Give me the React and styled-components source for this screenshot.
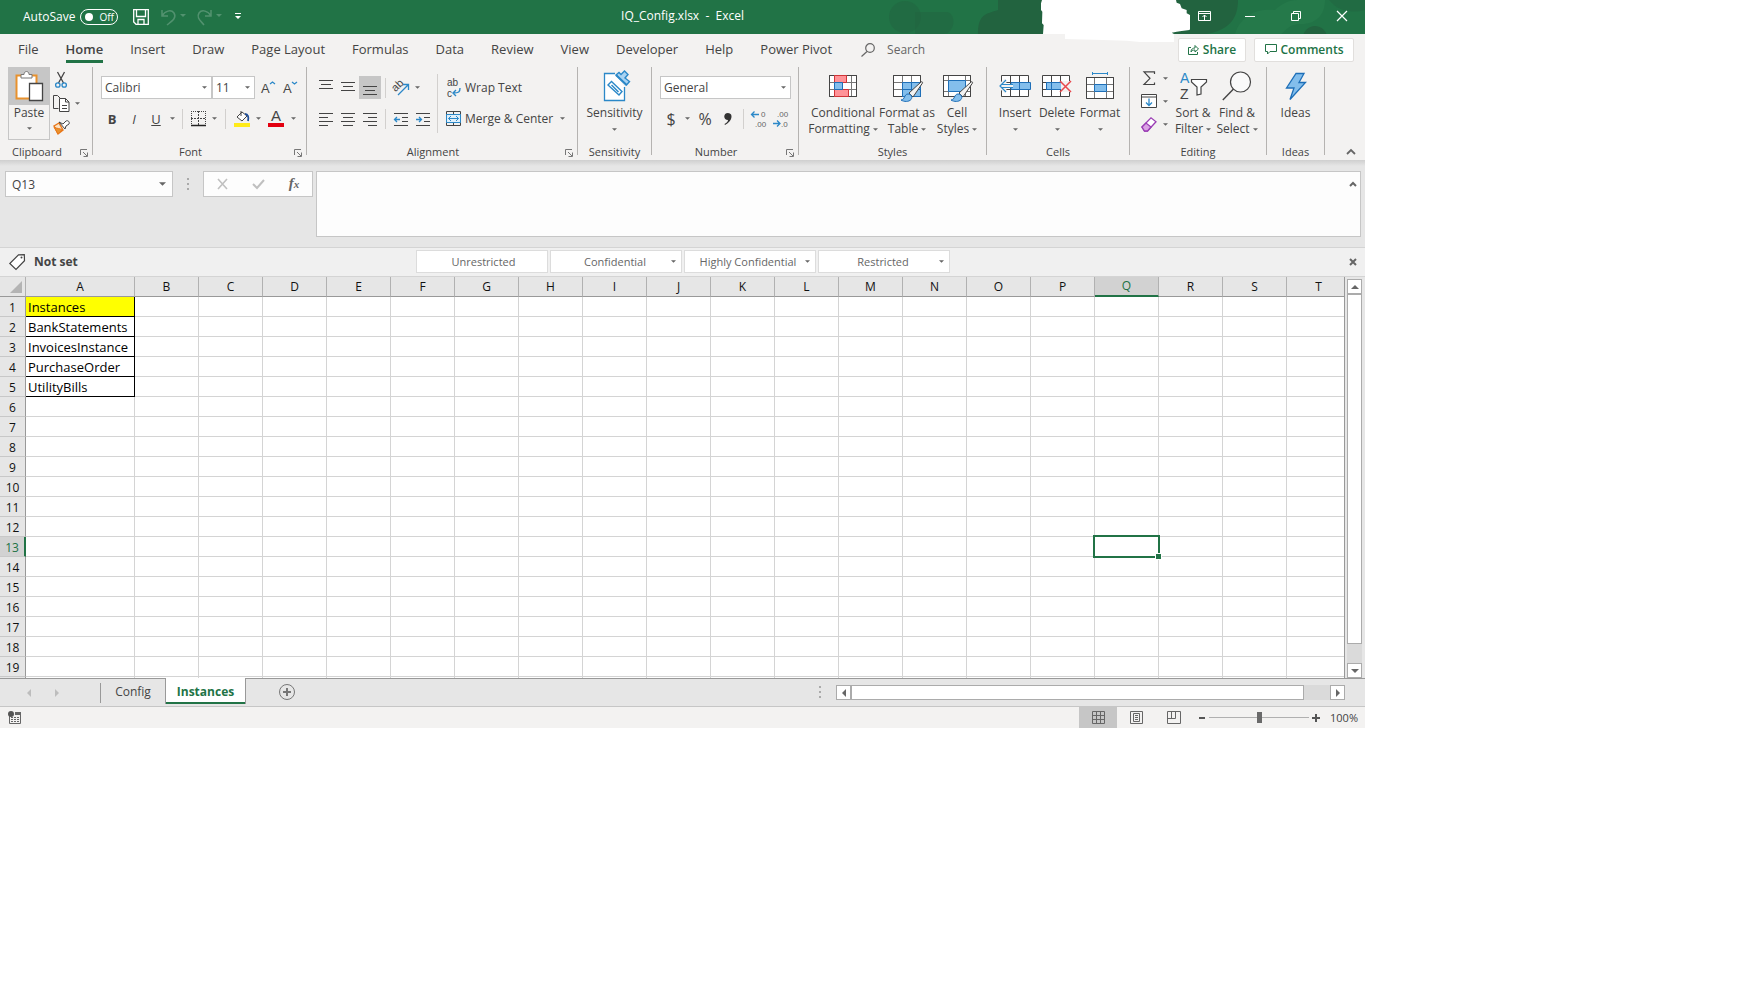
import React, { useState } from "react";
import styled, { createGlobalStyle, css } from "styled-components";

const green = "#217346";
const blue = "#2b88c8";
const ink = "#444444";
const line = "#c6c6c6";

const GlobalStyle = createGlobalStyle`
  *, *::before, *::after { box-sizing: border-box; }
  body {
    margin: 0;
    background: #ffffff;
    font-family: "Open Sans", "Noto Sans", sans-serif;
    font-size: 12px;
    color: ${ink};
  }
  button, input, select, textarea {
    font: inherit;
    color: inherit;
    margin: 0;
    padding: 0;
    border: 0;
    background: none;
    border-radius: 0;
    outline: none;
  }
  svg { display: block; flex: none; overflow: visible; }
`;

const Page = styled.div`
  padding-right: 381px;
`;
const Window = styled.main`
  position: relative;
  display: flex;
  flex-direction: column;
  background: #e6e6e6;
`;

/* title bar */
const TitleBar = styled.header`
  position: relative;
  display: grid;
  grid-template-columns: 1fr auto 1fr;
  align-items: start;
  height: 34px;
  overflow: hidden;
  background: ${green};
  color: #ffffff;
`;
const TitleArt = styled.svg`
  position: absolute;
  top: 0;
  right: 0;
`;
const Redaction = styled.svg`
  position: absolute;
  top: 0;
  right: 174px;
  z-index: 2;
`;
const QuickAccess = styled.div`
  position: relative;
  display: flex;
  align-items: center;
  height: 33px;
  padding-left: 23px;
  font-size: 12px;
`;
const AutoSave = styled.label`
  display: flex;
  align-items: center;
  gap: 5px;
  margin-right: 9px;
`;
const Toggle = styled.span`
  display: flex;
  align-items: center;
  gap: 6px;
  width: 38px;
  height: 16px;
  padding-left: 4px;
  border: 1px solid #ffffff;
  border-radius: 8px;
  font-size: 10px;
  input {
    appearance: none;
    width: 8px;
    height: 8px;
    border-radius: 50%;
    background: #ffffff;
  }
`;
const Title = styled.h1`
  position: relative;
  margin: 0;
  font-size: 12px;
  font-weight: 400;
  line-height: 31px;
  white-space: pre;
`;
const WindowButtons = styled.div`
  position: relative;
  display: flex;
  justify-content: flex-end;
`;

const IconButton = styled.button`
  display: flex;
  align-items: center;
  justify-content: center;
  flex: none;
  width: ${(p) => p.$w || 22}px;
  height: ${(p) => p.$h || 23}px;
  background: ${(p) => (p.$on ? "#c6c6c6" : "transparent")};
  font-size: ${(p) => p.$size || 12}px;
  opacity: ${(p) => (p.$dim ? 0.22 : 1)};
`;
const FxButton = styled(IconButton)`
  color: #666666;
  font-family: "Liberation Serif", serif;
  font-style: italic;
  font-weight: 700;
  font-size: 15px;
  sub { font-size: 11px; line-height: 12px; vertical-align: baseline; }
`;

/* tabs */
const TabRow = styled.nav`
  display: flex;
  align-items: center;
  gap: 1px;
  height: 33px;
  padding: 0 11px 2px 5px;
  background: #f3f2f1;
  font-size: 13px;
`;
const Tab = styled.button`
  position: relative;
  height: 30px;
  padding: 0 13px 2px;
  line-height: 26px;
  white-space: nowrap;
  ${(p) =>
    p.$active &&
    css`
      font-weight: 600;
      &::after {
        content: "";
        position: absolute;
        left: 13px;
        right: 13px;
        bottom: 2px;
        height: 3px;
        background: ${green};
      }
    `}
`;
const Search = styled.label`
  display: flex;
  align-items: center;
  gap: 12px;
  flex: 1;
  margin-left: 15px;
  input {
    width: 100px;
    height: 24px;
    font-size: 12px;
    &::placeholder { color: #666666; opacity: 1; }
  }
`;
const ShareButton = styled.button`
  display: flex;
  align-items: center;
  justify-content: center;
  gap: 4px;
  width: ${(p) => p.$w}px;
  height: 24px;
  margin-left: 7px;
  background: #ffffff;
  border: 1px solid #e1dfdd;
  border-radius: 2px;
  color: ${green};
  font-size: 12px;
  font-weight: 600;
`;

/* ribbon */
const Ribbon = styled.section`
  display: flex;
  height: 93px;
  background: #f3f2f1;
`;
const Group = styled.div`
  display: flex;
  flex-direction: column;
  flex: none;
  width: ${(p) => p.$w}px;
  height: 88px;
  border-right: 1px solid #b5b3b1;
`;
const GroupBody = styled.div`
  display: flex;
  flex: none;
  justify-content: ${(p) => p.$justify || "flex-start"};
  height: 77px;
  padding-left: ${(p) => p.$left || 0}px;
`;
const GroupFoot = styled.div`
  display: flex;
  align-items: center;
  flex: none;
  height: 16px;
  font-size: 11px;
  line-height: 16px;
  span { flex: 1; text-align: center; }
  button { width: 18px; height: 16px; padding: 2px 0 0 6px; }
`;
const Rows = styled.div`
  display: flex;
  flex-direction: column;
  gap: ${(p) => p.$gap || 8}px;
  padding-top: ${(p) => p.$top || 9}px;
`;
const Row = styled.div`
  display: flex;
  align-items: center;
  height: ${(p) => p.$h || 23}px;
`;
const Divider = styled.span`
  flex: none;
  width: 1px;
  height: ${(p) => p.$h || 20}px;
  margin: ${(p) => p.$m || "0 4px"};
  background: #d2d0ce;
`;
const TextButton = styled.button`
  display: flex;
  align-items: center;
  gap: 4px;
  height: 23px;
  padding-left: 8px;
  white-space: nowrap;
`;
const PasteButton = styled.button`
  display: flex;
  flex-direction: column;
  align-items: center;
  gap: 1px;
  width: 42px;
  height: 73px;
  background: linear-gradient(#c6c6c6 37px, transparent 37px);
  border: 1px solid #c6c6c6;
  line-height: 16px;
  > svg { margin-top: 5px; }
`;
const BigButton = styled.button`
  display: flex;
  flex-direction: column;
  align-items: center;
  width: ${(p) => p.$w}px;
  line-height: 16px;
  white-space: nowrap;
`;
const BigIcon = styled.span`
  display: flex;
  align-items: center;
  justify-content: center;
  height: ${(p) => p.$h || 38}px;
`;
const BigLine = styled.span`
  display: flex;
  align-items: center;
  gap: 3px;
  height: 16px;
`;
const SelectBox = styled.span`
  position: relative;
  display: flex;
  align-items: center;
  width: ${(p) => p.$w}px;
  height: 23px;
  margin-right: ${(p) => p.$mr || 0}px;
  background: #ffffff;
  border: 1px solid ${line};
  select {
    appearance: none;
    width: 100%;
    height: 21px;
    padding-left: 3px;
  }
  svg { position: absolute; right: 4px; }
`;
const Collapse = styled.div`
  display: flex;
  flex: 1;
  align-items: flex-end;
  justify-content: flex-end;
  padding: 0 4px 0 0;
`;

/* formula bar */
const FormulaBar = styled.section`
  display: flex;
  align-items: flex-start;
  height: 87px;
  padding: 11px 4px 0 5px;
  background: linear-gradient(#cfcfcf, #e6e6e6 6px);
`;
const NameBox = styled.div`
  display: flex;
  align-items: center;
  width: 168px;
  height: 26px;
  background: #fdfdfd;
  border: 1px solid ${line};
  input {
    flex: 1;
    min-width: 0;
    padding-left: 6px;
  }
`;
const Grip = styled.span`
  display: flex;
  align-items: center;
  justify-content: center;
  width: 30px;
  height: 26px;
`;
const FxBox = styled.div`
  display: flex;
  justify-content: space-around;
  width: 110px;
  height: 26px;
  margin-right: 3px;
  background: #fdfdfd;
  border: 1px solid ${line};
`;
const FormulaInput = styled.div`
  display: flex;
  flex: 1;
  height: 66px;
  background: #fdfdfd;
  border: 1px solid ${line};
  textarea {
    flex: 1;
    resize: none;
    padding: 4px;
  }
`;

/* sensitivity bar */
const LabelBar = styled.section`
  display: grid;
  grid-template-columns: 1fr auto 1fr;
  align-items: center;
  height: 30px;
  padding-bottom: 1px;
  background: #f0f0f0;
  border-top: 1px solid #d4d4d4;
  border-bottom: 1px solid #d4d4d4;
`;
const Current = styled.div`
  display: flex;
  align-items: center;
  gap: 9px;
  padding-left: 9px;
  font-weight: 700;
  font-size: 12px;
`;
const Labels = styled.div`
  display: flex;
  gap: 2px;
`;
const LabelButton = styled.button`
  display: flex;
  align-items: center;
  width: 132px;
  height: 23px;
  padding: 0 5px;
  background: #ffffff;
  border: 1px solid #dcdcdc;
  color: #666666;
  font-size: 11px;
  line-height: 20px;
  white-space: nowrap;
  span { flex: 1; text-align: center; padding-left: ${(p) => (p.$tight ? 2 : 4)}px; }
`;
const CloseLabel = styled.div`
  display: flex;
  justify-content: flex-end;
  padding-right: 1px;
`;

/* sheet */
const SheetArea = styled.section`
  display: flex;
`;
const GridView = styled.div`
  flex: 1;
  min-width: 0;
  overflow: hidden;
  border-right: 1px solid #999999;
`;
const Sheet = styled.table`
  width: 1351px;
  table-layout: fixed;
  border-collapse: separate;
  border-spacing: 0;
  background: #ffffff;
  font-size: 12px;
  line-height: 18px;
  color: #000000;
  th, td { padding: 0; }
`;
const Corner = styled.th`
  width: 26px;
  height: 20px;
  background: #e6e6e6;
  border-right: 1px solid #b1b1b1;
  border-bottom: 1px solid #999999;
  svg { margin-left: 10px; }
`;
const ColHead = styled.th`
  width: ${(p) => p.$w}px;
  height: 20px;
  font-weight: 400;
  background: ${(p) => (p.$sel ? "#d2d2d2" : "#e6e6e6")};
  color: ${(p) => (p.$sel ? green : "#111111")};
  border-right: 1px solid #b1b1b1;
  border-bottom: ${(p) => (p.$sel ? `2px solid ${green}` : "1px solid #999999")};
`;
const RowHead = styled.th`
  height: ${(p) => p.$h || 20}px;
  font-weight: 400;
  line-height: 17px;
  background: ${(p) => (p.$sel ? "#d2d2d2" : "#e6e6e6")};
  color: ${(p) => (p.$sel ? green : "#111111")};
  border-right: ${(p) => (p.$sel ? `2px solid ${green}` : "1px solid #999999")};
  border-bottom: ${(p) => (p.$h ? "0" : "1px solid #c8c8c8")};
  && { padding-top: ${(p) => (p.$h ? 0 : 2)}px; }
`;
const Cell = styled.td`
  position: relative;
  border-right: 1px solid ${(p) => (p.$boxed ? "#000000" : "#d4d4d4")};
  border-bottom: ${(p) => (p.$stub ? "0" : `1px solid ${p.$boxed ? "#000000" : "#d4d4d4"}`)};
  background: ${(p) => (p.$fill ? "#ffff00" : "transparent")};
  font-size: 13px;
  && { padding-left: 2px; }
  white-space: nowrap;
`;
const Selection = styled.span`
  position: absolute;
  z-index: 1;
  inset: -2px;
  border: 2px solid ${green};
  &::after {
    content: "";
    position: absolute;
    right: -4px;
    bottom: -4px;
    width: 7px;
    height: 7px;
    background: ${green};
    border: 1px solid #ffffff;
  }
`;
const VScroll = styled.div`
  display: flex;
  flex-direction: column;
  width: 20px;
  padding: 2px 3px 0 2px;
`;
const ScrollButton = styled.button`
  display: flex;
  align-items: center;
  justify-content: center;
  flex: none;
  width: 15px;
  height: 15px;
  background: #ffffff;
  border: 1px solid #ababab;
`;
const Track = styled.div`
  display: flex;
  flex-direction: ${(p) => (p.$across ? "row" : "column")};
  flex: 1;
  padding: ${(p) => (p.$across ? "0 26px 0 0" : "0 0 19px 0")};
  background: #dadada;
`;
const Thumb = styled.div`
  flex: 1;
  background: #ffffff;
  border: 1px solid #ababab;
`;

const SheetTabs = styled.nav`
  display: flex;
  align-items: flex-start;
  height: 28px;
  padding-right: 20px;
  border-top: 1px solid #999999;
`;
const SheetNav = styled.div`
  display: flex;
  width: 101px;
  height: 20px;
  margin-top: 4px;
  padding-left: 15px;
  border-right: 1px solid #999999;
`;
const SheetTab = styled.button`
  flex: none;
  width: ${(p) => (p.$active ? 81 : 64)}px;
  height: 25px;
  line-height: 23px;
  ${(p) =>
    p.$active &&
    css`
      margin-top: -1px;
      height: 26px;
      background: #ffffff;
      border: solid #999999;
      border-width: 0 1px;
      box-shadow: inset 0 -2px 0 ${green};
      color: ${green};
      font-weight: 700;
    `}
`;
const AddSheet = styled.button`
  margin: 5px 0 0 33px;
`;
const HScroll = styled.div`
  display: flex;
  flex: none;
  width: 38%;
  min-width: 200px;
  max-width: 509px;
  height: 15px;
  margin: 6px 0 0 1px;
`;
const Spacer = styled.span`
  flex: 1;
`;

const StatusBar = styled.footer`
  display: flex;
  align-items: center;
  height: 22px;
  padding-right: 8px;
  background: #f3f2f1;
  border-top: 1px solid #c6c6c6;
  font-size: 11px;
`;
const Zoom = styled.label`
  display: flex;
  align-items: center;
  gap: 3px;
  margin-left: 6px;
  input {
    appearance: none;
    width: 100px;
    height: 11px;
    background: linear-gradient(#b0b0b0, #b0b0b0) center / 100% 1px no-repeat;
    &::-webkit-slider-thumb {
      appearance: none;
      width: 5px;
      height: 11px;
      background: #6a6a6a;
    }
  }
  output { width: 27px; margin-left: 7px; line-height: 18px; white-space: nowrap; }
`;

/* small drawings */
const Caret = ({ c = "#666666", w = 5 }) => (
  <svg width={w} height={(w + 1) / 2} viewBox="0 0 6 3">
    <path d="M0 0h6L3 3z" fill={c} />
  </svg>
);
const CaretButton = ({ label, w = 11 }) => (
  <IconButton $w={w} aria-label={label}><Caret /></IconButton>
);
const Launcher = ({ label }) => (
  <button aria-label={label}>
    <svg width="8" height="8" viewBox="0 0 8 8" fill="none" stroke="#777">
      <path d="M.5 6V.5H7M3 3l4 4M7.500 3.500v4h-4" />
    </svg>
  </button>
);
const Pic = ({ w, h, children }) => (
  <svg width={w} height={h} viewBox={`0 0 ${w} ${h}`} fill="none" stroke={ink}>
    {children}
  </svg>
);
const Glyph = styled.text`
  font-family: "Liberation Sans", sans-serif;
  font-size: ${(p) => p.$size}px;
  fill: ${(p) => p.$c || ink};
  stroke: none;
`;
const Lines = ({ rows }) => (
  <Pic w={14} h={14}>
    {rows.map(([x, w], i) => (
      <path key={i} d={`M${x} ${i * 4 + 1.5}h${w}`} />
    ))}
  </Pic>
);
const VLines = ({ y }) => (
  <Pic w={14} h={15}>
    <path d={`M0 ${y + 0.5}h14M2 ${y + 4.5}h10M0 ${y + 8.5}h14`} />
  </Pic>
);

const Brush = ({ x, y }) => (
  <g transform={`translate(${x} ${y})`}>
    <path d="M8 10L20 -1c1-.8 2 .2 1.400 1.200L12 14z" fill="#f3f2f1" />
    <path d="M0 17c4 0 3-6 7-6 3 0 5 3 3 5.500-2 2.500-7 2.500-10 .5z" fill="#83beec" stroke="#1e6fb8" />
  </g>
);
const CellsBase = ({ children }) => (
  <Pic w={30} h={24}>
    <path d="M1.500 1.500h27v21h-27z" fill="#fff" />
    <path d="M1 8.500h28M1 15.500h28M10.500 1v22M19.500 1v22" stroke="#777" />
    <path d="M1.500 1.500h27v21h-27z" />
    {children}
  </Pic>
);

const ConditionalIcon = () => (
  <Pic w={28} h={22}>
    <path d="M.5.500h27v21H.5z" fill="#fff" />
    <path d="M0 7.500h28M0 14.500h28M5.500 0v22M22.500 0v22" stroke="#777" />
    <path d="M5.500 .5h12v7h-12zM5.500 14.500h14v7h-14z" fill="#ff9398" stroke="#d13438" />
    <path d="M5.500 7.500h8v7h-8z" fill="#83beec" stroke="#1e6fb8" />
    <path d="M5 .5H.5v21H5M18 .5h9.500v21H20" />
  </Pic>
);
const FormatTableIcon = () => (
  <CellsBase>
    <path d="M10.500 8.500h18v14h-18z" fill="#83beec" stroke="#1e6fb8" />
    <path d="M19.500 8v14M10 15.500h18" stroke="#1e6fb8" />
    <Brush x={9} y={9} />
  </CellsBase>
);
const CellStylesIcon = () => (
  <Pic w={30} h={24}>
    <path d="M1.500 1.500h27v21h-27z" fill="#fff" />
    <path d="M1 6.500h28M1 17.500h28M6.500 1v22M23.500 1v22" stroke="#777" />
    <path d="M6.500 6.500h17v11h-17z" fill="#83beec" stroke="#1e6fb8" />
    <path d="M1.500 1.500h27v21h-27z" />
    <Brush x={9} y={9} />
  </Pic>
);
const InsertIcon = () => (
  <Pic w={32} h={24}>
    <path d="M2.500 1.500h27v21h-27z" fill="#fff" />
    <path d="M2 8.500h28M2 15.500h28M11.500 1v22M20.500 1v22" />
    <path d="M12 8.500h19.500v7H12z" fill="#83beec" stroke="#1e6fb8" />
    <path d="M20.500 9v6" stroke="#1e6fb8" />
    <path d="M1 8h6v8H1z" fill="#f3f2f1" stroke="none" />
    <path d="M7 6l-6 6 6 6M1 12h13" stroke="#f3f2f1" strokeWidth="4" />
    <path d="M7 6l-6 6 6 6M2 10.500h12M2 13.500h12" stroke={blue} strokeWidth="1.200" />
  </Pic>
);
const DeleteIcon = () => (
  <Pic w={30} h={24}>
    <path d="M.5 1.500h27v21H.5z" fill="#fff" />
    <path d="M0 8.500h28M0 15.500h28M9.500 1v22M18.500 1v22" />
    <path d="M4.500 8.500h15v7h-15z" fill="#83beec" stroke="#1e6fb8" />
    <path d="M9.500 9v6" stroke="#1e6fb8" />
    <path d="M19 7h11v11H19z" fill="#f3f2f1" stroke="none" />
    <path d="M18 7l11 11M29 7L18 18" stroke="#e8484d" strokeWidth="1.500" />
  </Pic>
);
const FormatIcon = () => (
  <Pic w={28} h={28}>
    <path d="M.5 5.500h27v21H.5z" fill="#fff" />
    <path d="M0 12.500h28M0 19.500h28M8.500 5v22M20.500 5v22" stroke="#777" />
    <path d="M.5 5.500h27v21H.5z" />
    <path d="M8.500 12.500h12v7h-12z" fill="#83beec" stroke="#1e6fb8" />
    <path d="M6.500 0v3M21.500 0v3M6.500 1.500h15" stroke={blue} />
  </Pic>
);
const SensitivityIcon = () => (
  <Pic w={24} h={32}>
    <path d="M12 3.500H1.500v27h20V17" fill="#fff" stroke={blue} strokeWidth="1.300" />
    <g stroke={blue} strokeWidth="1.400" fill="#fff">
      <path d="M5 15l3.500-3.500L19 21.500 16 25z" />
      <path d="M8.500 15l7 7" />
      <path d="M13 5l3-2.500 2 2L21.500 1 25 4.500l-3 3.500 4.500 3.500-3 3.500z" fill="#a9d3f2" />
      <path d="M13 5l10.500 10" strokeWidth="2" />
    </g>
  </Pic>
);
const PasteIcon = () => (
  <Pic w={28} h={32}>
    <path d="M1.500 5.500h20v23h-20z" fill="#fff" stroke="#e8912d" strokeWidth="2" />
    <path d="M6 8V4.500h3c0-4 5-4 5 0h3V8z" fill="#fff" stroke="#777" />
    <path d="M14.500 13.500h13v17h-13z" fill="#fff" strokeWidth="1.300" />
  </Pic>
);
const CutIcon = () => (
  <Pic w={12} h={18}>
    <path d="M2.500 1l6 11M9.500 1l-6 11" strokeWidth="1.300" />
    <circle cx="2.800" cy="14" r="2.200" stroke={blue} strokeWidth="1.300" />
    <circle cx="9.200" cy="14" r="2.200" stroke={blue} strokeWidth="1.300" />
  </Pic>
);
const CopyIcon = () => (
  <Pic w={17} h={17}>
    <path d="M5.500 13.500h-5v-13h4l3 3" />
    <path d="M6.500 3.500h6l3.500 3.500v9.500H6.500z" fill="#fff" />
    <path d="M12.500 3.500V7H16M9 10.500h5M9 13.500h5" />
  </Pic>
);
const PainterIcon = () => (
  <Pic w={17} h={17}>
    <path d="M6 5L1 8l4 8 5-4z" fill="#fbe3c5" stroke="#e8771a" strokeWidth="1.400" />
    <path d="M1 9c3 2 6 1 8 3L5 16z" fill="#e8912d" stroke="#e8771a" />
    <path d="M6 4l6 7 1-3 3-2c1-2-1-4-3-3l-3 3z" fill="#fff" />
  </Pic>
);
const BordersIcon = () => (
  <Pic w={15} h={15}>
    <path d="M0 .5h15M.5 0v15M14.500 0v15" strokeDasharray="1 1" />
    <path d="M7.500 0v14M0 7.500h15" strokeDasharray="2 1" />
    <path d="M0 14.500h15" stroke="#222" strokeWidth="1.500" />
  </Pic>
);
const FillIcon = () => (
  <Pic w={16} h={17}>
    <path d="M7 1v5M3 7l5-5 5 4-5 5z" fill="#fff" />
    <path d="M11 4c3 0 4 3 3 7" stroke="#1e4e9a" strokeWidth="1.800" />
    <path d="M0 13h16v4H0z" fill="#ffeb1a" stroke="none" />
  </Pic>
);
const FontColorIcon = () => (
  <Pic w={16} h={17}>
    <Glyph $size={15} x="8" y="11" textAnchor="middle">A</Glyph>
    <path d="M0 13h16v4H0z" fill="#e3000f" stroke="none" />
  </Pic>
);
const GrowIcon = ({ down }) => (
  <Pic w={14} h={14}>
    <Glyph $size={13} x="0" y="12">A</Glyph>
    <path d={down ? "M9 1l2.500 2L14 1" : "M9 3l2.500-2L14 3"} stroke={blue} strokeWidth="1.300" />
  </Pic>
);
const OrientIcon = () => (
  <Pic w={17} h={17}>
    <Glyph $size={11} x="0" y="11" transform="rotate(-45 4 9)">ab</Glyph>
    <path d="M5 16L15 6M10 5.500h5.500V11" stroke={blue} strokeWidth="1.300" />
  </Pic>
);
const WrapIcon = () => (
  <Pic w={15} h={16}>
    <Glyph $size={10} x="1" y="6">ab</Glyph>
    <Glyph $size={10} x="1" y="17">c</Glyph>
    <path d="M14 8c0 4-1 5-7 5M10 10l-3 3 3 3" stroke={blue} strokeWidth="1.400" />
  </Pic>
);
const MergeIcon = () => (
  <Pic w={15} h={15}>
    <path d="M.5.500h14v14H.5zM7.500 0v3M7.500 12v3" />
    <path d="M.5 3.500h14v8H.5z" fill="#dff0fb" stroke={blue} />
    <path d="M2.500 7.500h10M5 5L2.500 7.500 5 10M10 5l2.500 2.500L10 10" stroke={blue} />
  </Pic>
);
const IndentIcon = ({ out }) => (
  <Pic w={14} h={14}>
    <path d="M0 1.500h14M8 5.500h6M8 9.500h6M0 13.500h14" />
    <path d={out ? "M6 7.500H.5M3 5L.5 7.500 3 10" : "M0 7.500h5.500M3 5l2.500 2.500L3 10"} stroke={blue} strokeWidth="1.300" />
  </Pic>
);
const DecimalIcon = ({ more }) => (
  <Pic w={16} h={16}>
    <Glyph $size={8} $c="#666" x={more ? 10 : 4} y="6">{more ? "0" : ".00"}</Glyph>
    <Glyph $size={8} $c="#666" x={more ? 4 : 8} y="16">{more ? ".00" : ".0"}</Glyph>
    <path d={more ? "M8 3.500H.5M3.500 .5l-3 3 3 3" : "M0 12.500h7M4 9.500l3 3-3 3"} stroke={blue} strokeWidth="1.300" />
  </Pic>
);
const SigmaIcon = () => (
  <Pic w={13} h={15}>
    <path d="M11.500 3V.8H1l6 6.500-6 6.200h10.500V11.500" strokeWidth="1.200" />
  </Pic>
);
const FillDownIcon = () => (
  <Pic w={16} h={14}>
    <path d="M.5.500h15v13H.5zM.5 3h15" fill="#fff" />
    <path d="M8 4.500v7M5 8.500l3 3 3-3" stroke={blue} strokeWidth="1.300" />
  </Pic>
);
const EraserIcon = () => (
  <Pic w={16} h={15}>
    <path d="M1 10L10 .8l5 4L6.500 14h-3z" fill="#fff" stroke="#9b3fb5" strokeWidth="1.300" />
    <path d="M1 10l4-4 5 4-3.500 4h-3z" fill="#dba3e5" stroke="#9b3fb5" strokeWidth="1.300" />
  </Pic>
);
const SortIcon = () => (
  <Pic w={28} h={28}>
    <Glyph $size={14} $c={blue} x="1" y="11">A</Glyph>
    <Glyph $size={14} x="1" y="27">Z</Glyph>
    <path d="M12.500 7.500h15v2.500l-5.500 5v7l-4 1v-8l-5.500-5z" fill="#fff" strokeWidth="1.200" />
  </Pic>
);
const FindIcon = () => (
  <Pic w={30} h={30}>
    <circle cx="18.500" cy="11" r="10" fill="#fafafa" strokeWidth="1.200" />
    <path d="M11.500 18L.8 29" strokeWidth="1.400" />
  </Pic>
);
const IdeasIcon = () => (
  <Pic w={22} h={29}>
    <path d="M11 1.500h8l-5 9h6.500L5 27.500l4-11.500H1.500z" fill="#83beec" stroke="#1e6fb8" strokeWidth="1.300" />
  </Pic>
);
const Arrow = ({ dir, c = "#666666" }) => {
  const shapes = {
    up: "M0 6h8L4 2z",
    down: "M0 2h8L4 6z",
    left: "M6 0v8L2 4z",
    right: "M2 0v8l4-4z",
  };
  return (
    <svg width="8" height="8" viewBox="0 0 8 8"><path d={shapes[dir]} fill={c} /></svg>
  );
};
const Dots = () => (
  <Pic w={2} h={12}>
    <path d="M0 1h2M0 6h2M0 11h2" stroke="#aaa" strokeWidth="2" />
  </Pic>
);

const tabs = [
  "File", "Home", "Insert", "Draw", "Page Layout", "Formulas", "Data",
  "Review", "View", "Developer", "Help", "Power Pivot",
];
const columns = "ABCDEFGHIJKLMNOPQRST".split("");
const columnA = ["Instances", "BankStatements", "InvoicesInstance", "PurchaseOrder", "UtilityBills"];
const labels = ["Unrestricted", "Confidential", "Highly Confidential", "Restricted"];

const RibbonGroup = ({ name, w, left, justify, launcher, children }) => (
  <Group $w={w}>
    <GroupBody $left={left} $justify={justify}>{children}</GroupBody>
    <GroupFoot>
      <span>{name}</span>
      {launcher && <Launcher label={`${name} settings`} />}
    </GroupFoot>
  </Group>
);

const Big = ({ w, icon, first, second, drop = true }) => (
  <BigButton $w={w}>
    <BigIcon>{icon}</BigIcon>
    <BigLine>{first}</BigLine>
    <BigLine>
      {second}
      {drop && <Caret />}
    </BigLine>
  </BigButton>
);

const TopBar = () => (
  <TitleBar>
    <TitleArt width="480" height="34" viewBox="0 0 480 34">
      <g fill="#22633f">
        <circle cx="20" cy="17" r="16" opacity=".5" />
        <path d="M30 12h32c10 2 8 22-4 22H30z" opacity=".5" />
        <path d="M93 34c0-20 8-20 20-24V0h240c0 18-8 30-32 34z" />
        <circle cx="430" cy="38" r="12" />
        <path d="M444 0h36v10c-16 4-28 0-36-10z" opacity=".5" />
      </g>
      <path d="M350 34c6-20 24-26 40-24 6-6 14-10 22-10h28c0 14-8 24-24 24-12 0-14 6-20 10z" fill="#25794a" />
    </TitleArt>
    <QuickAccess>
      <AutoSave>
        AutoSave
        <Toggle><input type="checkbox" />Off</Toggle>
      </AutoSave>
      <IconButton $w={28} aria-label="Save">
        <svg width="16" height="16" viewBox="0 0 16 16" fill="none" stroke="#fff" strokeWidth="1.300">
          <path d="M.7.700h14.600v14.600H3L.7 13zM3.500 1v6.500h9V1M5 15v-4.500h6V15" />
        </svg>
      </IconButton>
      <IconButton $w={36} $dim aria-label="Undo">
        <svg width="25" height="16" viewBox="0 0 25 16" fill="none" stroke="#fff" strokeWidth="1.500">
          <path d="M1 1v6h6M1 7c3-5 9-7 12-3 3 5-2 8-7 12" />
          <path d="M19 5h6l-3 3z" fill="#fff" stroke="none" />
        </svg>
      </IconButton>
      <IconButton $w={36} $dim aria-label="Redo">
        <svg width="25" height="16" viewBox="0 0 25 16" fill="none" stroke="#fff" strokeWidth="1.500">
          <path d="M14 1v6H8M14 7C11 2 5 0 2 4c-3 5 2 8 5 12" />
          <path d="M19 5h6l-3 3z" fill="#fff" stroke="none" />
        </svg>
      </IconButton>
      <IconButton $w={22} aria-label="Customize toolbar">
        <svg width="6" height="7" viewBox="0 0 6 7" fill="#fff"><path d="M0 0h6v1H0zM0 3h6L3 6z" /></svg>
      </IconButton>
    </QuickAccess>
    <Title>{"IQ_Config.xlsx  -  Excel"}</Title>
    <WindowButtons>
      <IconButton $w={46} $h={32} aria-label="Ribbon display options">
        <svg width="13" height="10" viewBox="0 0 13 10" fill="none" stroke="#fff">
          <path d="M.5.500h12v9H.5zM0 2.500h13M6.500 9V4M4.500 6l2-2 2 2" />
        </svg>
      </IconButton>
      <IconButton $w={46} $h={32} aria-label="Minimize">
        <svg width="10" height="1"><path d="M0 .5h10" stroke="#fff" /></svg>
      </IconButton>
      <IconButton $w={46} $h={32} aria-label="Restore">
        <svg width="10" height="10" viewBox="0 0 10 10" fill="none" stroke="#fff">
          <path d="M.5 2.500h7v7h-7zM2.500 2V.5h7v7H8" />
        </svg>
      </IconButton>
      <IconButton $w={46} $h={32} aria-label="Close">
        <svg width="10" height="10" viewBox="0 0 10 10"><path d="M0 0l10 10M10 0L0 10" stroke="#fff" strokeWidth="1.200" /></svg>
      </IconButton>
    </WindowButtons>
  </TitleBar>
);

const MainRibbon = () => (
  <Ribbon>
    <RibbonGroup name="Clipboard" w={93} left={8} launcher>
      <PasteButton>
        <BigIcon $h={36}><PasteIcon /></BigIcon>
        Paste
        <Caret />
      </PasteButton>
      <Rows $top={1} $gap={1}>
        <Row><IconButton aria-label="Cut"><CutIcon /></IconButton></Row>
        <Row $h={22}>
          <IconButton aria-label="Copy"><CopyIcon /></IconButton>
          <CaretButton label="Copy options" />
        </Row>
        <Row $h={22}><IconButton aria-label="Format painter"><PainterIcon /></IconButton></Row>
      </Rows>
    </RibbonGroup>

    <RibbonGroup name="Font" w={214} left={8} launcher>
      <Rows>
        <Row>
          <SelectBox $w={111}>
            <select aria-label="Font"><option>Calibri</option></select>
            <Caret />
          </SelectBox>
          <SelectBox $w={43} $mr={2}>
            <select aria-label="Font size"><option>11</option></select>
            <Caret />
          </SelectBox>
          <IconButton aria-label="Increase font size"><GrowIcon /></IconButton>
          <IconButton aria-label="Decrease font size"><GrowIcon down /></IconButton>
        </Row>
        <Row>
          <IconButton $size={13} aria-label="Bold"><b>B</b></IconButton>
          <IconButton $size={13} aria-label="Italic"><i>I</i></IconButton>
          <IconButton $size={13} aria-label="Underline"><u>U</u></IconButton>
          <CaretButton label="Underline options" />
          <Divider />
          <IconButton aria-label="Borders"><BordersIcon /></IconButton>
          <CaretButton label="Border options" />
          <Divider $m="0 5px" />
          <IconButton aria-label="Fill color"><FillIcon /></IconButton>
          <CaretButton label="Fill options" />
          <IconButton $w={24} aria-label="Font color"><FontColorIcon /></IconButton>
          <CaretButton label="Font color options" />
        </Row>
      </Rows>
    </RibbonGroup>

    <RibbonGroup name="Alignment" w={271} left={8} launcher>
      <Rows>
        <Row>
          <IconButton aria-label="Top align"><VLines y={0} /></IconButton>
          <IconButton aria-label="Middle align"><VLines y={2} /></IconButton>
          <IconButton $on aria-label="Bottom align"><VLines y={6} /></IconButton>
          <Divider />
          <IconButton aria-label="Orientation"><OrientIcon /></IconButton>
          <CaretButton label="Orientation options" />
        </Row>
        <Row>
          <IconButton aria-label="Align left"><Lines rows={[[0, 14], [0, 9], [0, 14], [0, 9]]} /></IconButton>
          <IconButton aria-label="Center"><Lines rows={[[0, 14], [2, 10], [0, 14], [2, 10]]} /></IconButton>
          <IconButton aria-label="Align right"><Lines rows={[[0, 14], [5, 9], [0, 14], [5, 9]]} /></IconButton>
          <Divider />
          <IconButton aria-label="Decrease indent"><IndentIcon out /></IconButton>
          <IconButton aria-label="Increase indent"><IndentIcon /></IconButton>
        </Row>
      </Rows>
      <Divider $h={59} $m="7px 0 0 3px" />
      <Rows>
        <TextButton><WrapIcon />Wrap Text</TextButton>
        <Row>
          <TextButton><MergeIcon />Merge &amp; Center</TextButton>
          <CaretButton label="Merge options" w={18} />
        </Row>
      </Rows>
    </RibbonGroup>

    <RibbonGroup name="Sensitivity" w={74} justify="center">
      <Big w={72} icon={<SensitivityIcon />} first="Sensitivity" />
    </RibbonGroup>

    <RibbonGroup name="Number" w={147} left={8} launcher>
      <Rows>
        <SelectBox $w={131}>
          <select aria-label="Number format"><option>General</option></select>
          <Caret />
        </SelectBox>
        <Row>
          <IconButton $size={16} aria-label="Currency">$</IconButton>
          <CaretButton label="Currency options" />
          <IconButton $w={24} $size={16} aria-label="Percent">%</IconButton>
          <IconButton aria-label="Comma style">
            <svg width="8" height="12" viewBox="0 0 8 12">
              <path d="M4 0c6 0 4 9-3 12l-.5-1C3 10 4 8 4 7-1 7-1 0 4 0z" fill="#333" />
            </svg>
          </IconButton>
          <Divider />
          <IconButton aria-label="Increase decimal"><DecimalIcon more /></IconButton>
          <IconButton aria-label="Decrease decimal"><DecimalIcon /></IconButton>
        </Row>
      </Rows>
    </RibbonGroup>

    <RibbonGroup name="Styles" w={188} left={8}>
      <Big w={72} icon={<ConditionalIcon />} first="Conditional" second="Formatting" />
      <Big w={56} icon={<FormatTableIcon />} first="Format as" second="Table" />
      <Big w={44} icon={<CellStylesIcon />} first="Cell" second="Styles" />
    </RibbonGroup>

    <RibbonGroup name="Cells" w={143} left={7}>
      <Big w={42} icon={<InsertIcon />} first="Insert" />
      <Big w={42} icon={<DeleteIcon />} first="Delete" />
      <Big w={44} icon={<FormatIcon />} first="Format" />
    </RibbonGroup>

    <RibbonGroup name="Editing" w={137} left={8}>
      <Rows $top={1} $gap={1}>
        <Row $h={21}>
          <IconButton aria-label="AutoSum"><SigmaIcon /></IconButton>
          <CaretButton label="AutoSum options" />
        </Row>
        <Row $h={22}>
          <IconButton aria-label="Fill"><FillDownIcon /></IconButton>
          <CaretButton label="Fill options" />
        </Row>
        <Row $h={22}>
          <IconButton aria-label="Clear"><EraserIcon /></IconButton>
          <CaretButton label="Clear options" />
        </Row>
      </Rows>
      <Big w={44} icon={<SortIcon />} first="Sort &amp;" second="Filter" />
      <Big w={44} icon={<FindIcon />} first="Find &amp;" second="Select" />
    </RibbonGroup>

    <RibbonGroup name="Ideas" w={58} justify="center">
      <Big w={50} icon={<IdeasIcon />} first="Ideas" drop={false} />
    </RibbonGroup>

    <Collapse>
      <IconButton $w={20} $h={16} aria-label="Collapse ribbon">
        <svg width="8" height="6" viewBox="0 0 8 6"><path d="M0 5l4-4 4 4" fill="none" stroke="#666" strokeWidth="1.800" /></svg>
      </IconButton>
    </Collapse>
  </Ribbon>
);

const Workbook = () => (
  <SheetArea>
    <GridView>
      <Sheet>
        <thead>
          <tr>
            <Corner>
              <svg width="12" height="12"><path d="M12 0v12H0z" fill="#b4b4b4" /></svg>
            </Corner>
            {columns.map((c) => (
              <ColHead key={c} $w={c === "A" ? 109 : 64} $sel={c === "Q"}>{c}</ColHead>
            ))}
          </tr>
        </thead>
        <tbody>
          {Array.from({ length: 19 }, (_, i) => i + 1).map((r) => (
            <tr key={r}>
              <RowHead $sel={r === 13}>{r}</RowHead>
              {columns.map((c) => (
                <Cell key={c} $boxed={c === "A" && r <= 5} $fill={c === "A" && r === 1}>
                  {c === "A" && columnA[r - 1]}
                  {c === "Q" && r === 13 && <Selection />}
                </Cell>
              ))}
            </tr>
          ))}
          <tr>
            <RowHead $h={1} />
            {columns.map((c) => <Cell key={c} $stub />)}
          </tr>
        </tbody>
      </Sheet>
    </GridView>
    <VScroll>
      <ScrollButton aria-label="Scroll up"><Arrow dir="up" /></ScrollButton>
      <Track><Thumb /></Track>
      <ScrollButton aria-label="Scroll down"><Arrow dir="down" /></ScrollButton>
    </VScroll>
  </SheetArea>
);

const App = () => {
  const [zoom, setZoom] = useState(100);
  const [name, setName] = useState("Q13");
  return (
    <Page>
      <GlobalStyle />
      <Window>
        <TopBar />
        <Redaction width="150" height="42" viewBox="183 0 450 126">
          <path
            d="M186 0l-3 10v20l4 5-1 35 5 5-2 27h66v15l90 2 95 3 40 4h102v-24l-7-4 15-3 15-2 23-3 2-2V45l-10-5V30l-15-5-5-13-10-4-2-8z"
            fill="#fff"
          />
        </Redaction>
        <TabRow>
          {tabs.map((t) => (
            <Tab key={t} $active={t === "Home"}>{t}</Tab>
          ))}
          <Search>
            <svg width="14" height="14" viewBox="0 0 14 14" fill="none" stroke="#666" strokeWidth="1.200">
              <circle cx="9" cy="5" r="4.300" />
              <path d="M6 8.500L.5 13.500" />
            </svg>
            <input placeholder="Search" aria-label="Search" />
          </Search>
          <ShareButton $w={68}>
            <Pic w={11} h={11}>
              <path d="M3 3.500H.5v7h9V8" stroke={green} />
              <path d="M3 8c0-3 2-4 4-4V1.500L10.500 5 7 8V6C5 6 4 6.500 3 8z" stroke={green} />
            </Pic>
            Share
          </ShareButton>
          <ShareButton $w={100}>
            <Pic w={12} h={11}>
              <path d="M.5.500h11v7H5L2.500 10V7.500h-2z" stroke={green} />
            </Pic>
            Comments
          </ShareButton>
        </TabRow>
        <MainRibbon />

        <FormulaBar>
          <NameBox>
            <input aria-label="Name box" value={name} onChange={(e) => setName(e.target.value)} />
            <IconButton $w={20} aria-label="Name list"><Caret w={7} /></IconButton>
          </NameBox>
          <Grip><Dots /></Grip>
          <FxBox>
            <IconButton $w={30} aria-label="Cancel">
              <svg width="11" height="10" viewBox="0 0 11 10"><path d="M1 0l9 10M10 0L1 10" stroke="#c0c0c0" strokeWidth="1.600" /></svg>
            </IconButton>
            <IconButton $w={30} aria-label="Enter">
              <svg width="13" height="10" viewBox="0 0 13 10"><path d="M1 5l4 4 7-8" fill="none" stroke="#c0c0c0" strokeWidth="2" /></svg>
            </IconButton>
            <FxButton $w={30} aria-label="Insert function"><span>f<sub>x</sub></span></FxButton>
          </FxBox>
          <FormulaInput>
            <textarea aria-label="Formula" />
            <IconButton $w={14} aria-label="Collapse formula bar">
              <svg width="8" height="6" viewBox="0 0 8 6"><path d="M1 5l3-3 3 3" fill="none" stroke="#666" strokeWidth="2" /></svg>
            </IconButton>
          </FormulaInput>
        </FormulaBar>

        <LabelBar>
          <Current>
            <Pic w={16} h={16}>
              <path d="M9.500 .8L15.300.700l.2 6L7 15.500.8 9.500z" fill="#fff" strokeWidth="1.200" />
              <circle cx="12.500" cy="3.500" r="1" fill={ink} stroke="none" />
            </Pic>
            Not set
          </Current>
          <Labels>
            {labels.map((l, i) => (
              <LabelButton key={l} $tight={i === 2}>
                <span>{l}</span>
                {i > 0 && <Caret />}
              </LabelButton>
            ))}
          </Labels>
          <CloseLabel>
            <IconButton aria-label="Close sensitivity bar">
              <svg width="8" height="8" viewBox="0 0 8 8"><path d="M1 1l6 6M7 1L1 7" stroke="#666" strokeWidth="2" /></svg>
            </IconButton>
          </CloseLabel>
        </LabelBar>

        <Workbook />

        <SheetTabs>
          <SheetNav>
            <IconButton $w={28} $h={20} aria-label="Previous sheet"><Arrow dir="left" c="#bdbdbd" /></IconButton>
            <IconButton $w={28} $h={20} aria-label="Next sheet"><Arrow dir="right" c="#bdbdbd" /></IconButton>
          </SheetNav>
          <SheetTab>Config</SheetTab>
          <SheetTab $active>Instances</SheetTab>
          <AddSheet aria-label="New sheet">
            <Pic w={16} h={16}>
              <circle cx="8" cy="8" r="7.500" stroke="#777" />
              <path d="M4 8h8M8 4v8" stroke="#777" strokeWidth="2" />
            </Pic>
          </AddSheet>
          <Spacer />
          <Grip><Dots /></Grip>
          <HScroll>
            <ScrollButton aria-label="Scroll left"><Arrow dir="left" /></ScrollButton>
            <Track $across><Thumb /></Track>
            <ScrollButton aria-label="Scroll right"><Arrow dir="right" /></ScrollButton>
          </HScroll>
        </SheetTabs>

        <StatusBar>
          <IconButton $w={29} $h={21} aria-label="Record macro">
            <Pic w={13} h={13}>
              <path d="M1.500 5v7.500h11V1.500H7" stroke="#666" />
              <path d="M7 2.500h6" stroke="#666" strokeWidth="3" />
              <path d="M3 6.500h8M3 8.500h8M3 10.500h8" stroke="#666" strokeDasharray="2 1" />
              <circle cx="3" cy="3" r="3" fill="#555" stroke="none" />
            </Pic>
          </IconButton>
          <Spacer />
          <IconButton $w={38} $h={21} $on aria-label="Normal view">
            <Pic w={13} h={13}><path d="M.5.500h12v12H.5zM4.500 0v13M8.500 0v13M0 4.500h13M0 8.500h13" stroke="#666" /></Pic>
          </IconButton>
          <IconButton $w={38} $h={21} aria-label="Page layout view">
            <Pic w={13} h={13}><path d="M.5.500h12v12H.5zM3.500 2.500h6v8h-6zM5 4.500h3M5 6.500h3M5 8.500h3" stroke="#666" /></Pic>
          </IconButton>
          <IconButton $w={38} $h={21} aria-label="Page break view">
            <Pic w={14} h={13}><path d="M.5.500h13v12H.5zM4.500 0v7.500M8.500 0v7.500H0" stroke="#666" /></Pic>
          </IconButton>
          <Zoom>
            <svg width="7" height="8"><path d="M0 4h6" stroke="#555" strokeWidth="2" /></svg>
            <input type="range" min="10" max="190" value={zoom} onChange={(e) => setZoom(+e.target.value)} aria-label="Zoom" />
            <svg width="8" height="8"><path d="M0 4h8M4 0v8" stroke="#555" strokeWidth="2" /></svg>
            <output>{zoom}%</output>
          </Zoom>
        </StatusBar>
      </Window>
    </Page>
  );
};

export default App;
